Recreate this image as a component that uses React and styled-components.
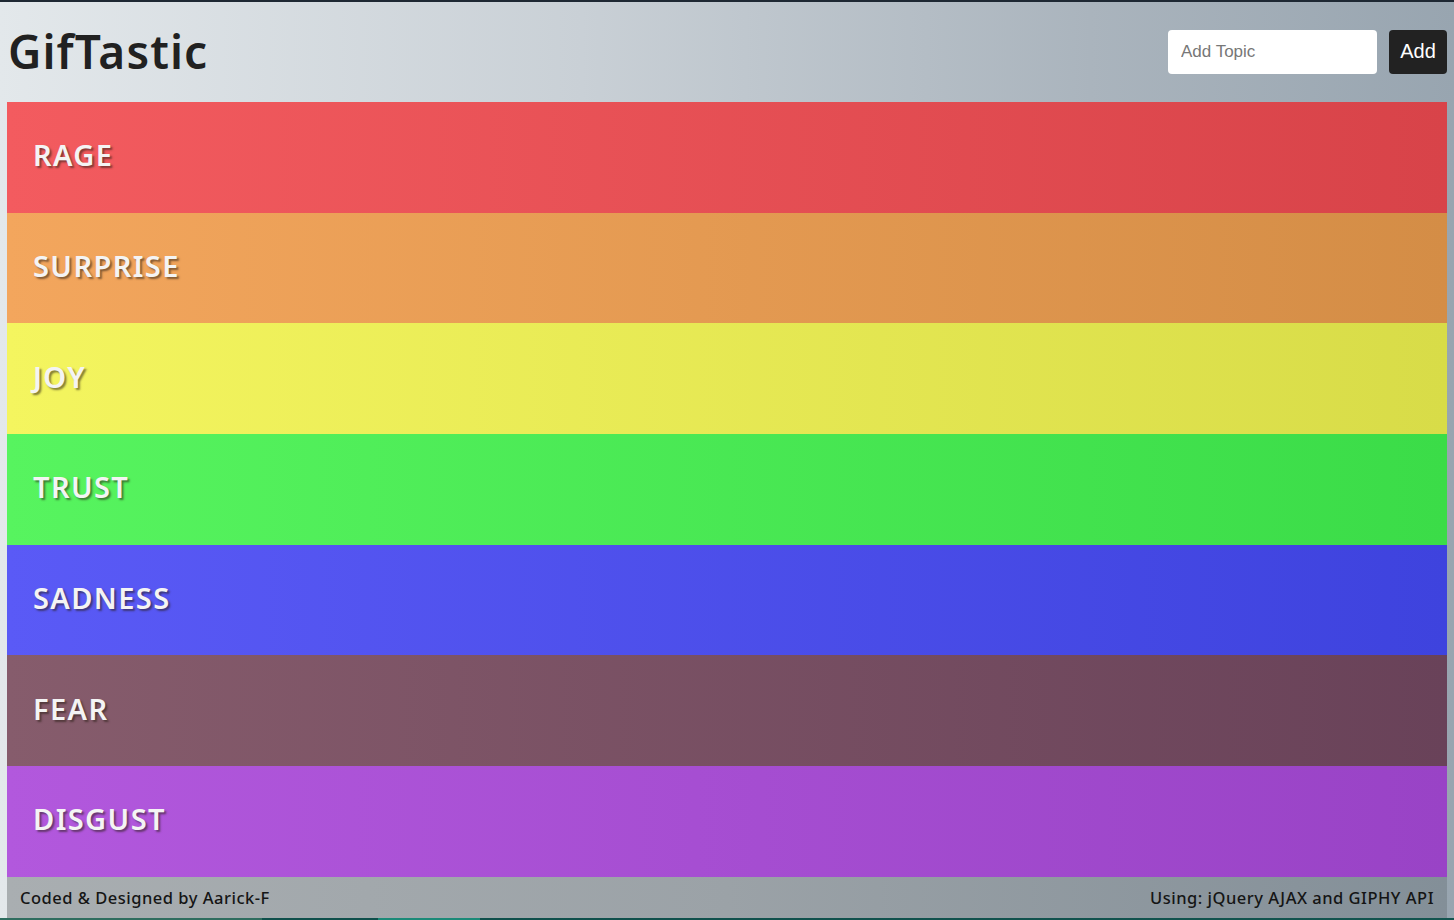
import React from "react";
import styled, { createGlobalStyle } from "styled-components";

const Global = createGlobalStyle`
  html, body { margin: 0; padding: 0; }
  body {
    min-height: 920px;
    background: linear-gradient(90deg, #e3e8eb 0%, #c9d0d6 40%, #aab4bd 75%, #98a5b0 100%);
    border-top: 2px solid #1e2833;
    font-family: "Noto Sans", "Open Sans", sans-serif;
    overflow: hidden;
  }
`;

const Page = styled.div`
  padding: 0 7px;
  display: flex;
  flex-direction: column;
`;

const Header = styled.header`
  height: 100px;
  display: flex;
  align-items: center;
  justify-content: space-between;
`;

const Title = styled.h1`
  margin: 0 0 2px 1px;
  font-family: "Noto Sans", sans-serif;
  font-size: 46px;
  font-weight: 600;
  color: #212121;
  letter-spacing: 1.1px;
`;

const Form = styled.form`
  display: flex;
  align-items: center;
  gap: 12px;
`;

const Input = styled.input`
  width: 209px;
  height: 44px;
  box-sizing: border-box;
  border: none;
  border-radius: 4px;
  padding: 0 13px;
  font-family: "Liberation Sans", Arial, sans-serif;
  font-size: 17px;
  background: #fff;
  outline: none;
  &::placeholder { color: #777; }
`;

const Button = styled.button`
  height: 44px;
  width: 58px;
  border: none;
  border-radius: 4px;
  background: #222222;
  color: #fff;
  font-family: "Liberation Sans", Arial, sans-serif;
  font-size: 20px;
  padding: 0 0 2px;
  cursor: pointer;
`;

const Rows = styled.div`
  display: flex;
  flex-direction: column;
`;

const Row = styled.div`
  height: 110.7px;
  display: flex;
  align-items: center;
  padding-left: 26px;
  background: linear-gradient(90deg, ${(p) => p.$from}, ${(p) => p.$to});
`;

const RowLabel = styled.span`
  font-family: "Noto Sans", sans-serif;
  font-size: 29px;
  font-weight: 600;
  color: #f4f4f4;
  text-shadow: 2px 2px 2px rgba(40, 30, 20, 0.55);
  letter-spacing: 1.4px;
  margin-top: -5px;
`;

const Footer = styled.footer`
  height: 41px;
  display: flex;
  align-items: center;
  justify-content: space-between;
  padding: 0 13px;
  background: linear-gradient(90deg, #a9aeb1 0%, #9ba2a7 50%, #838f98 100%);
  font-family: "Noto Sans", sans-serif;
  font-size: 16.5px;
  font-weight: 500;
  letter-spacing: 0.5px;
  color: #151515;
`;

const Strip = styled.div`
  height: 2px;
  margin: 0 -7px;
  background: linear-gradient(90deg, #2f6d5f 0%, #2f6d5f 18%, #0f4f4b 18%, #0f4f4b 26%, #1b8a78 26%, #1b8a78 33%, #0f4f4b 33%, #13544f 100%);
`;

const topics = [
  { name: "RAGE", from: "#f35b5f", to: "#d84349" },
  { name: "SURPRISE", from: "#f3a65d", to: "#d48d46" },
  { name: "JOY", from: "#f4f55f", to: "#d8dc48" },
  { name: "TRUST", from: "#57f45f", to: "#3bdc48" },
  { name: "SADNESS", from: "#5a5af6", to: "#3e43de" },
  { name: "FEAR", from: "#865c6c", to: "#694259" },
  { name: "DISGUST", from: "#b258dd", to: "#9943c6" },
];

export default function App() {
  return (
    <>
      <Global />
      <Page>
        <Header>
          <Title>GifTastic</Title>
          <Form onSubmit={(e) => e.preventDefault()}>
            <Input placeholder="Add Topic" />
            <Button type="submit">Add</Button>
          </Form>
        </Header>
        <Rows>
          {topics.map((t) => (
            <Row key={t.name} $from={t.from} $to={t.to}>
              <RowLabel>{t.name}</RowLabel>
            </Row>
          ))}
        </Rows>
        <Footer>
          <span>Coded &amp; Designed by Aarick-F</span>
          <span>Using: jQuery AJAX and GIPHY API</span>
        </Footer>
        <Strip />
      </Page>
    </>
  );
}
